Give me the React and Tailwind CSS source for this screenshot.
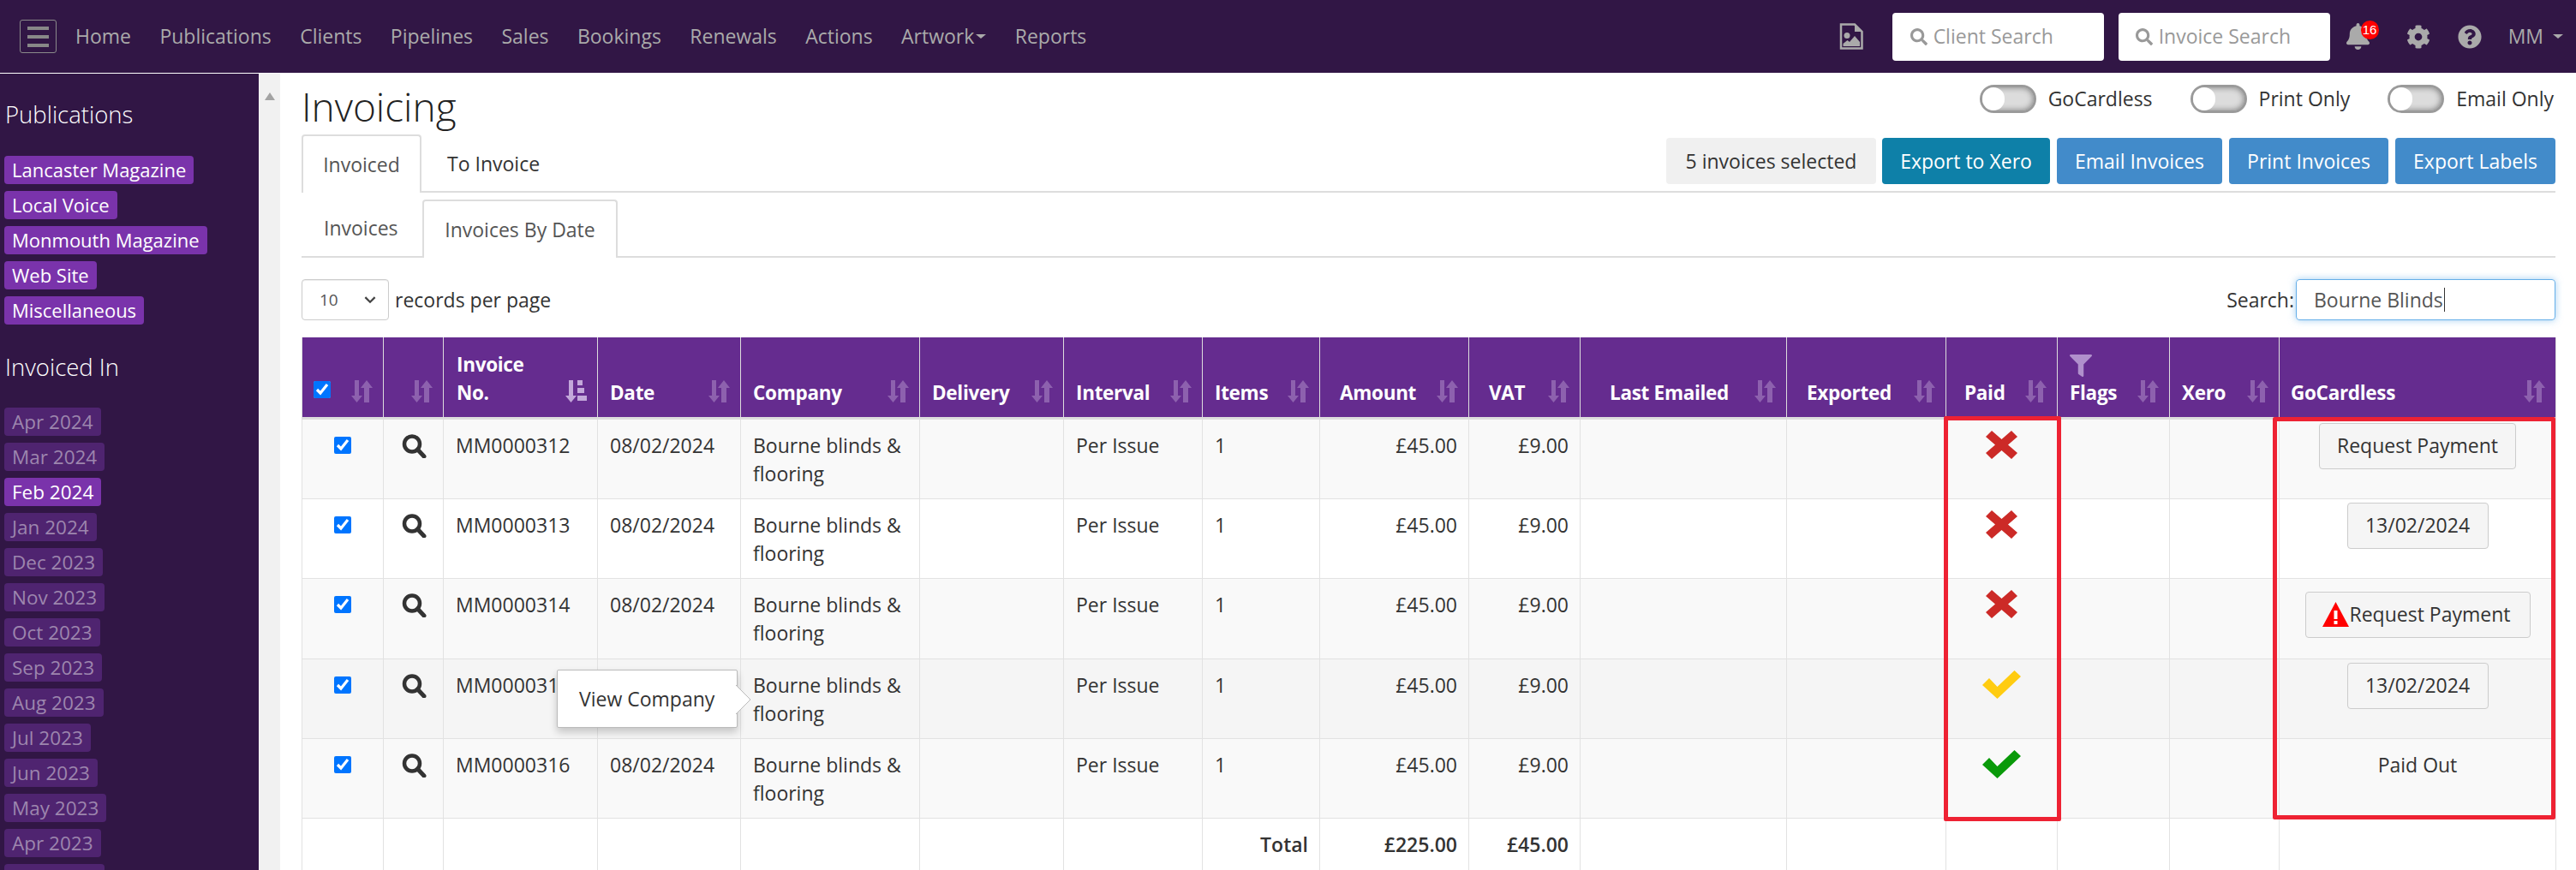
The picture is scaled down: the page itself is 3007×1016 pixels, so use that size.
import React from 'react';
import { FaSearch, FaCog, FaBell, FaQuestionCircle, FaFilter } from 'react-icons/fa';

const navItems = ['Home', 'Publications', 'Clients', 'Pipelines', 'Sales', 'Bookings', 'Renewals', 'Actions'];
const publications = ['Lancaster Magazine', 'Local Voice', 'Monmouth Magazine', 'Web Site', 'Miscellaneous'];
const months = ['Apr 2024', 'Mar 2024', 'Feb 2024', 'Jan 2024', 'Dec 2023', 'Nov 2023', 'Oct 2023', 'Sep 2023', 'Aug 2023', 'Jul 2023', 'Jun 2023', 'May 2023', 'Apr 2023', 'Mar 2023'];

const columns = [
  { label: '', width: 'w-[95px]', check: true, pl: 'pl-[13px]' },
  { label: '', width: 'w-[70px]', pl: 'pl-[13px]' },
  { label: 'Invoice No.', width: 'w-[180px]', pl: 'pl-[15px]', sorted: true },
  { label: 'Date', width: 'w-[167px]', pl: 'pl-[14px]' },
  { label: 'Company', width: 'w-[209px]', pl: 'pl-[14px]' },
  { label: 'Delivery', width: 'w-[168px]', pl: 'pl-[14px]' },
  { label: 'Interval', width: 'w-[162px]', pl: 'pl-[14px]' },
  { label: 'Items', width: 'w-[137px]', pl: 'pl-[14px]' },
  { label: 'Amount', width: 'w-[174px]', pl: 'pl-[23px]' },
  { label: 'VAT', width: 'w-[130px]', pl: 'pl-[23px]' },
  { label: 'Last Emailed', width: 'w-[241px]', pl: 'pl-[34px]' },
  { label: 'Exported', width: 'w-[186px]', pl: 'pl-[23px]' },
  { label: 'Paid', width: 'w-[130px]', pl: 'pl-[21px]' },
  { label: 'Flags', width: 'w-[131px]', pl: 'pl-[14px]', filter: true },
  { label: 'Xero', width: 'w-[128px]', pl: 'pl-[14px]' },
  { label: 'GoCardless', width: 'w-[323px]', pl: 'pl-[13px]' },
];

const rows = [
  { no: 'MM0000312', paid: 'no', gc: 'request', bg: 'bg-[#f9f9f9]', h: 'h-[93px]' },
  { no: 'MM0000313', paid: 'no', gc: 'date', bg: 'bg-white', h: 'h-[93px]' },
  { no: 'MM0000314', paid: 'no', gc: 'warn', bg: 'bg-[#f9f9f9]', h: 'h-[94px]' },
  { no: 'MM0000315', paid: 'pending', gc: 'date', bg: 'bg-[#f5f5f5]', h: 'h-[93px]' },
  { no: 'MM0000316', paid: 'yes', gc: 'out', bg: 'bg-[#f9f9f9]', h: 'h-[93px]' },
];

function SortIcon({ sorted }) {
  if (sorted) {
    return (
      <svg viewBox="0 0 25 26" className="w-[25px] h-[26px] shrink-0 mb-[5px]" fill="#c3a8da">
        <path d="M4 0h5v18h4l-6.500 8L0 18h4z" />
        <rect x="14" y="0" width="6" height="6" />
        <rect x="14" y="9" width="8" height="6" />
        <rect x="14" y="18" width="11" height="6" />
      </svg>
    );
  }
  return (
    <svg viewBox="0 0 25 26" className="w-[25px] h-[26px] shrink-0 mb-[5px]" fill="#8d61ae">
      <path d="M4 0h5v18h4l-6.500 8L0 18h4z" />
      <path d="M15 26h6V9h4L18 0l-7 9h4z" />
    </svg>
  );
}

function SearchGlyph() {
  return (
    <svg viewBox="0 0 30 28" className="block w-[30px] h-[28px] mx-auto" fill="none" stroke="#333">
      <circle cx="13" cy="11.500" r="9" strokeWidth="4.500" />
      <path d="M19.500 18l7.500 8" strokeWidth="5" strokeLinecap="round" />
    </svg>
  );
}

function Cross() {
  return (
    <svg viewBox="0 0 37 33" className="block w-[37px] h-[33px] mx-auto" fill="#cc2a27">
      <path d="M0 7L7 0l11.500 10L30 0l7 7-11 9.500L37 26l-7 7-11.500-10L7 33l-7-7 11-9.500z" />
    </svg>
  );
}

function Tick({ color }) {
  return (
    <svg viewBox="0 0 45 33" className={`block w-[45px] h-[33px] mx-auto ${color}`} fill="currentColor">
      <path d="M0 17l8-8 9.500 10L37.500 0 45 7 17.500 33z" />
    </svg>
  );
}

function FileImageIcon() {
  return (
    <svg viewBox="0 0 28 31" className="w-[28px] h-[31px]">
      <path d="M2 1.500h16l8.500 8.500v19.500H2z" fill="none" stroke="#aaa" strokeWidth="2.500" />
      <path d="M18 1.500v8.500h8.500z" fill="#aaa" />
      <circle cx="9" cy="14.500" r="3.500" fill="#aaa" />
      <path d="M4.500 27v-3l5-4 2.500 2 6-7 6 7v5z" fill="#aaa" />
    </svg>
  );
}

function WarnIcon() {
  return (
    <svg viewBox="0 0 31 29" className="w-[31px] h-[29px] shrink-0">
      <path d="M15.500 0L31 29H0z" fill="#f00" />
      <rect x="13.500" y="10" width="4" height="10" fill="#fff" />
      <rect x="13.500" y="22" width="4" height="4" fill="#fff" />
    </svg>
  );
}

function Toggle({ label }) {
  return (
    <div className="flex items-center gap-[14px]">
      <div className="w-[66px] h-[33px] rounded-full bg-[#dcdcdc] border-[3px] border-[#9a9a9a] flex items-center shadow-[inset_0_0_7px_rgba(0,0,0,0.45)]">
        <div className="w-[26px] h-[27px] rounded-full bg-white" />
      </div>
      <span className="text-[#333]">{label}</span>
    </div>
  );
}

function GcButton({ children, className = '' }) {
  return (
    <button className={`inline-flex items-center justify-center h-[54px] text-[#333] whitespace-nowrap bg-[#f5f5f5] border border-[#ccc] rounded-[4px] ${className}`}>
      {children}
    </button>
  );
}

const cell = 'border border-[#e2e2e2]';
const textCell = 'border border-[#e2e2e2] px-[14px] pt-[14px] pb-[12px]';
const moneyCell = 'border border-[#e2e2e2] px-[13px] pt-[14px] pb-[12px] text-right';

export default function App() {
  return (
    <div className="relative w-[3007px] h-[1016px] overflow-hidden bg-white font-['Open_Sans',sans-serif] text-[23px] leading-[33px] text-[#333]">
      <header className="h-[85px] bg-[#311645] flex items-center">
        <button className="ml-[23px] w-[43px] h-[39px] border border-[#8a8a8a] rounded-[3px] flex flex-col justify-center items-center gap-[6px]">
          <span className="block w-[25px] h-[4px] bg-[#888]" />
          <span className="block w-[25px] h-[4px] bg-[#888]" />
          <span className="block w-[25px] h-[4px] bg-[#888]" />
        </button>
        <nav className="ml-[22px] flex items-center gap-[33.400px] text-[#aaa]">
          {navItems.map((item) => (
            <a key={item}>{item}</a>
          ))}
          <a className="flex items-center gap-[2px]">
            Artwork
            <span className="w-0 h-0 border-x-[6px] border-x-transparent border-t-[5px] border-t-[#aaa]" />
          </a>
          <a>Reports</a>
        </nav>
        <div className="ml-auto flex items-center text-[#aaa]">
          <FileImageIcon />
          <div className="ml-[34px] w-[247px] h-[56px] bg-white rounded-[4px] flex items-center pl-[21px] gap-[7px] text-[#999]">
            <FaSearch className="w-[20px] h-[20px]" />
            Client Search
          </div>
          <div className="ml-[17px] w-[247px] h-[56px] bg-white rounded-[4px] flex items-center pl-[20px] gap-[7px] text-[#999]">
            <FaSearch className="w-[20px] h-[20px]" />
            Invoice Search
          </div>
          <div className="ml-[17px] relative">
            <FaBell className="w-[31px] h-[31px]" />
            <span className="absolute -top-[3px] -right-[9px] w-[21px] h-[22px] rounded-full bg-[#f00] text-white text-[15px] leading-[22px] text-center font-['Liberation_Sans',sans-serif]">16</span>
          </div>
          <FaCog className="ml-[41px] w-[28px] h-[28px]" />
          <FaQuestionCircle className="ml-[32px] w-[28px] h-[28px]" />
          <span className="ml-[31px]">MM</span>
          <span className="ml-[11px] mr-[15px] w-0 h-0 border-x-[6px] border-x-transparent border-t-[5px] border-t-[#aaa]" />
        </div>
      </header>

      <div className="flex h-[931px] pt-px">
        <aside className="w-[302px] shrink-0 bg-[#311645] pl-[5px] overflow-hidden">
          <h3 className="mt-[28px] pl-px text-[27.500px] leading-[40px] font-light text-white">Publications</h3>
          <ul className="mt-[28px] flex flex-col gap-[8px]">
            {publications.map((p) => (
              <li key={p} className="h-[33px]">
                <span className="inline-block h-[33px] px-[9px] rounded-[4px] bg-[#7a33ab] text-white text-[22px] leading-[33px]">{p}</span>
              </li>
            ))}
          </ul>
          <h3 className="mt-[30px] pl-px text-[27.500px] leading-[40px] font-light text-white">Invoiced In</h3>
          <ul className="mt-[27px] flex flex-col gap-[8px]">
            {months.map((m) => (
              <li key={m} className="h-[33px]">
                {m === 'Feb 2024' ? (
                  <span className="inline-block h-[33px] px-[9px] rounded-[4px] bg-[#7a33ab] text-white text-[22.500px] leading-[33px]">{m}</span>
                ) : (
                  <span className="inline-block h-[33px] px-[9px] rounded-[4px] bg-[#4f2470] text-[#9d86ae] text-[22.500px] leading-[33px]">{m}</span>
                )}
              </li>
            ))}
          </ul>
        </aside>
        <div className="w-[25px] shrink-0 bg-[#f1f1f1] flex justify-center pt-[22px]">
          <span className="w-0 h-0 border-x-[6px] border-x-transparent border-b-[9px] border-b-[#a3a3a3]" />
        </div>

        <main className="flex-1 pl-[25px] pr-[24px] min-w-0">
          <div className="flex justify-between items-start h-[71px]">
            <h1 className="text-[46px] leading-[60px] font-light text-[#222] mt-[8px]">Invoicing</h1>
            <div className="flex items-center gap-[44px] mt-[13px] mr-[2px]">
              <Toggle label="GoCardless" />
              <Toggle label="Print Only" />
              <Toggle label="Email Only" />
            </div>
          </div>

          <div className="flex justify-between items-start h-[68px] border-b-2 border-[#ddd]">
            <div className="flex">
              <div className="h-[68px] w-[140px] bg-white border-2 border-[#ddd] border-b-0 rounded-t-[4px] flex items-center justify-center text-[#555]">Invoiced</div>
              <div className="h-[68px] pl-[30px] flex items-center text-[#333]">To Invoice</div>
            </div>
            <div className="flex items-center gap-[8px] mt-[4px] text-white">
              <div className="h-[54px] w-[245px] mr-[-1px] bg-[#f0f0f0] rounded-[4px] flex items-center justify-center text-[#333]">5 invoices selected</div>
              <button className="h-[54px] w-[196px] bg-[#0e80a8] rounded-[4px]">Export to Xero</button>
              <button className="h-[54px] w-[193px] bg-[#428bca] rounded-[4px]">Email Invoices</button>
              <button className="h-[54px] w-[186px] bg-[#428bca] rounded-[4px]">Print Invoices</button>
              <button className="h-[54px] w-[187px] bg-[#428bca] rounded-[4px]">Export Labels</button>
            </div>
          </div>

          <div className="flex h-[76px] border-b-2 border-[#ddd] items-end">
            <div className="w-[141px] h-[66px] pl-[26px] flex items-center text-[#555]">Invoices</div>
            <div className="w-[228px] h-[68px] -mb-[2px] bg-white border-2 border-[#ddd] border-b-0 rounded-t-[4px] flex items-center justify-center text-[#555]">Invoices By Date</div>
          </div>

          <div className="flex justify-between items-center h-[48px] mt-[25px]">
            <div className="flex items-center">
              <div className="w-[102px] h-[48px] border border-[#ccc] rounded-[4px] flex items-center justify-between pl-[20px] pr-[14px] text-[19px] text-[#555] shadow-[inset_0_1px_1px_rgba(0,0,0,0.075)]">
                10
                <svg viewBox="0 0 12 8" className="w-[14px] h-[9px]"><path d="M1 1l5 5 5-5" fill="none" stroke="#444" strokeWidth="2" /></svg>
              </div>
              <span className="ml-[7px]">records per page</span>
            </div>
            <div className="flex items-center">
              <span>Search:</span>
              <div className="ml-[2px] w-[303px] h-[48px] border border-[#66afe9] rounded-[4px] shadow-[0_0_8px_rgba(102,175,233,0.6)] flex items-center pl-[20px] text-[#555]">
                Bourne Blinds
                <span className="ml-[1px] w-px h-[28px] bg-[#333]" />
              </div>
            </div>
          </div>

          <table className="mt-[20px] w-[2631px] table-fixed border-collapse">
            <colgroup>
              {columns.map((c, i) => (
                <col key={i} className={c.width} />
              ))}
            </colgroup>
            <thead>
              <tr className="h-[94px] bg-[#652c8f] text-white">
                {columns.map((c, i) => (
                  <th key={i} className={`${c.pl} pr-[12px] pb-[12px] align-bottom text-left text-[22.500px] font-bold tracking-[-0.3px] border-x border-[#ddd] border-b-[3px] border-b-[#ddd]`}>
                    <div className="flex items-end justify-between">
                      <div>
                        {c.filter && <FaFilter className="w-[26px] h-[26px] text-[#b090cc] mb-[2px]" />}
                        {c.check ? <input type="checkbox" defaultChecked className="block w-[20px] h-[20px] mb-[10px] accent-[#0075ff]" /> : c.label === 'Invoice No.' ? <>Invoice<br />No.</> : c.label}
                      </div>
                      <SortIcon sorted={c.sorted} />
                    </div>
                  </th>
                ))}
              </tr>
            </thead>
            <tbody>
              {rows.map((r) => (
                <tr key={r.no} className={`${r.h} ${r.bg} align-top`}>
                  <td className={`${cell} pt-[20px]`}>
                    <input type="checkbox" defaultChecked className="block mx-auto w-[20px] h-[20px] accent-[#0075ff]" />
                  </td>
                  <td className={`${cell} pt-[17px]`}>
                    <SearchGlyph />
                  </td>
                  <td className={textCell}>{r.no}</td>
                  <td className={textCell}>08/02/2024</td>
                  <td className={textCell}>Bourne blinds &amp; flooring</td>
                  <td className={cell} />
                  <td className={textCell}>Per Issue</td>
                  <td className={textCell}>1</td>
                  <td className={moneyCell}>£45.00</td>
                  <td className={moneyCell}>£9.00</td>
                  <td className={cell} />
                  <td className={cell} />
                  <td className={`${cell} pt-[13px]`}>
                    {r.paid === 'no' && <Cross />}
                    {r.paid === 'pending' && <Tick color="text-[#ffcc11]" />}
                    {r.paid === 'yes' && <Tick color="text-[#0a9a0a]" />}
                  </td>
                  <td className={cell} />
                  <td className={cell} />
                  <td className={`${cell} text-center pt-[4px]`}>
                    {r.gc === 'request' && <GcButton className="w-[230px]">Request Payment</GcButton>}
                    {r.gc === 'date' && <GcButton className="w-[165px]">13/02/2024</GcButton>}
                    {r.gc === 'warn' && (
                      <GcButton className="w-[263px] mt-[11px] gap-[1px] pr-[3px]">
                        <WarnIcon />
                        Request Payment
                      </GcButton>
                    )}
                    {r.gc === 'out' && <div className="pt-[10px]">Paid Out</div>}
                  </td>
                </tr>
              ))}
              <tr className="h-[62px] bg-white align-top font-semibold">
                {columns.map((c, i) => {
                  if (i === 7) return <td key={i} className={moneyCell}>Total</td>;
                  if (i === 8) return <td key={i} className={moneyCell}>£225.00</td>;
                  if (i === 9) return <td key={i} className={moneyCell}>£45.00</td>;
                  return <td key={i} className={cell} />;
                })}
              </tr>
            </tbody>
          </table>
        </main>
      </div>

      <div className="absolute left-[650px] top-[782px] w-[211px] h-[68px] bg-white border border-[#bbb] rounded-[2px] shadow-[0_5px_10px_rgba(0,0,0,0.2)] flex items-center pl-[25px]">
        View Company
        <svg viewBox="0 0 18 34" className="absolute left-[208px] top-[17px] w-[18px] h-[34px]">
          <path d="M0 0l17 17L0 34" fill="#fff" stroke="#bbb" />
        </svg>
      </div>

      <div className="absolute left-[2269px] top-[486px] w-[137px] h-[473px] border-[5px] border-[#ee2233] rounded-[2px] pointer-events-none" />
      <div className="absolute left-[2653px] top-[487px] w-[330px] h-[470px] border-[5px] border-[#ee2233] rounded-[2px] pointer-events-none" />
    </div>
  );
}
